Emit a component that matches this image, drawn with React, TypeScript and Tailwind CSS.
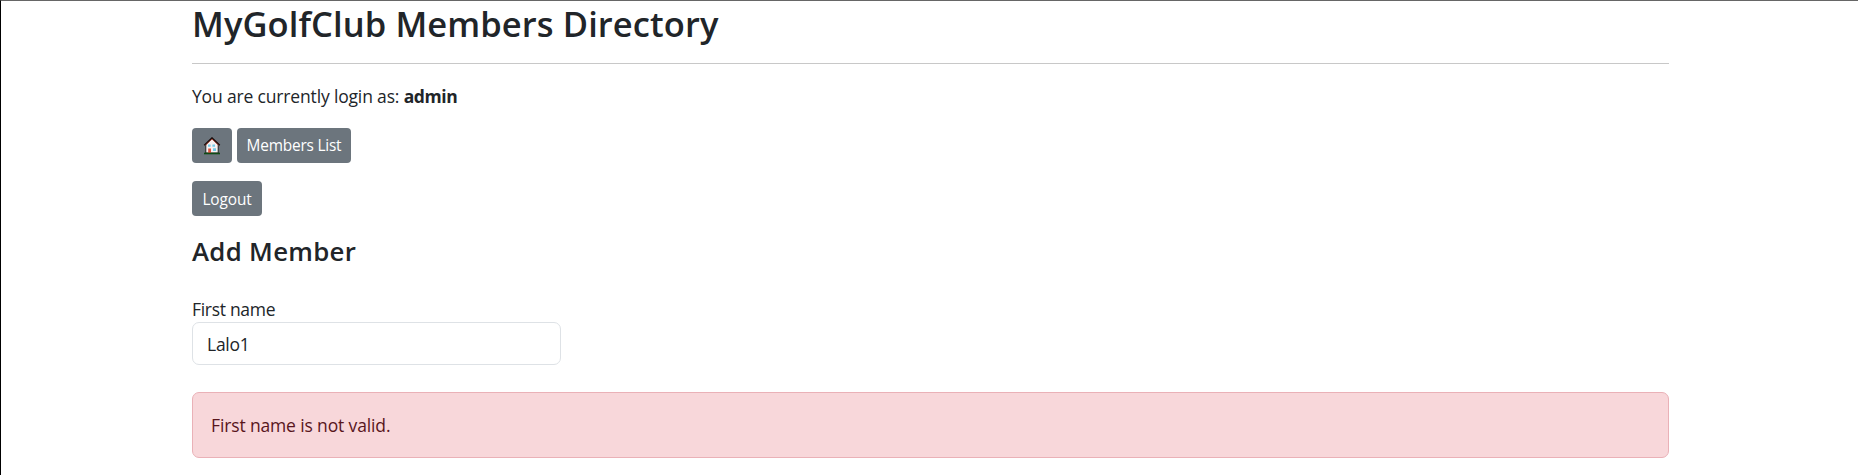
function HouseIcon() {
  return (
    <svg viewBox="0 0 18 18" className="h-[18px] w-[18px]" aria-hidden="true">
      <path d="M2.800 7.500 9 1.500l6.200 6V16H2.800Z" fill="#f6f1f0" stroke="#151515" strokeWidth="0.900" />
      <path d="M1.200 8.200 9 .8l7.800 7.400" fill="none" stroke="#1a0d0b" strokeWidth="1.300" />
      <path d="M2.500 8.200 9 2.100l6.500 6.100" fill="none" stroke="#a33e30" strokeWidth="0.900" />
      <path d="M5 7.500h2.600v2.300H5ZM9.400 7.500H12v2.300H9.400ZM10 11.300h3V14h-3Z" fill="#74cbe8" />
      <path d="M5.200 11.500H8v4.700H5.200Z" fill="#e0533f" />
      <path d="M1 15.700h16v1.600H1Z" fill="#0e4b14" />
    </svg>
  );
}

export default function App() {
  return (
    <div className="h-[475px] w-full overflow-hidden border-t border-l border-t-[#666] border-l-black bg-white font-['Open_Sans','Noto_Sans',sans-serif] text-[17.5px] leading-[26px] text-[#212529]">
      <main className="ml-[191px] flex w-[1477px] flex-col pt-[2px]">
        <h1 className="text-[34.5px] leading-[42px] font-semibold whitespace-nowrap">
          <span className="tracking-[0.1px]">MyGolfClub Members Directory</span>
        </h1>
        <hr className="mt-[18px] border-t border-[#c8c8c8]" />
        <p className="mt-[19px] whitespace-nowrap">
          <span className="tracking-[-0.16px]">You are currently login as: </span>
          <b className="font-bold tracking-[-0.4px]">admin</b>
        </p>
        <nav className="mt-[19px] flex gap-[5px] text-[15.4px] text-white">
          <button className="flex h-[35px] w-[40px] items-center justify-center rounded-[4px] bg-[#6c757d]" aria-label="Home">
            <HouseIcon />
          </button>
          <button className="h-[35px] w-[114px] rounded-[4px] bg-[#6c757d] tracking-[-0.2px] whitespace-nowrap">Members List</button>
        </nav>
        <button className="mt-[18px] h-[35px] w-[70px] rounded-[4px] bg-[#6c757d] pt-[2px] text-[15.4px] tracking-[-0.1px] text-white">Logout</button>
        <h2 className="mt-[19px] text-[25.8px] leading-[32px] font-semibold">
          <span className="tracking-[0.3px]">Add Member</span>
        </h2>
        <label className="mt-[29px]" htmlFor="first-name">
          <span className="tracking-[-0.3px]">First name</span>
        </label>
        <input
          id="first-name"
          defaultValue="Lalo1"
          className="h-[43px] w-[369px] rounded-[7px] border border-[#dee2e6] bg-white pt-px pr-[13px] pl-[14px] tracking-[-0.25px] outline-none"
        />
        <div className="mt-[27px] flex h-[66px] items-center rounded-[7px] border border-[#eab1b7] bg-[#f8d7da] px-[18px] pb-px text-[#58151c]" role="alert">
          <span className="tracking-[-0.14px]">First name is not valid.</span>
        </div>
      </main>
    </div>
  );
}
